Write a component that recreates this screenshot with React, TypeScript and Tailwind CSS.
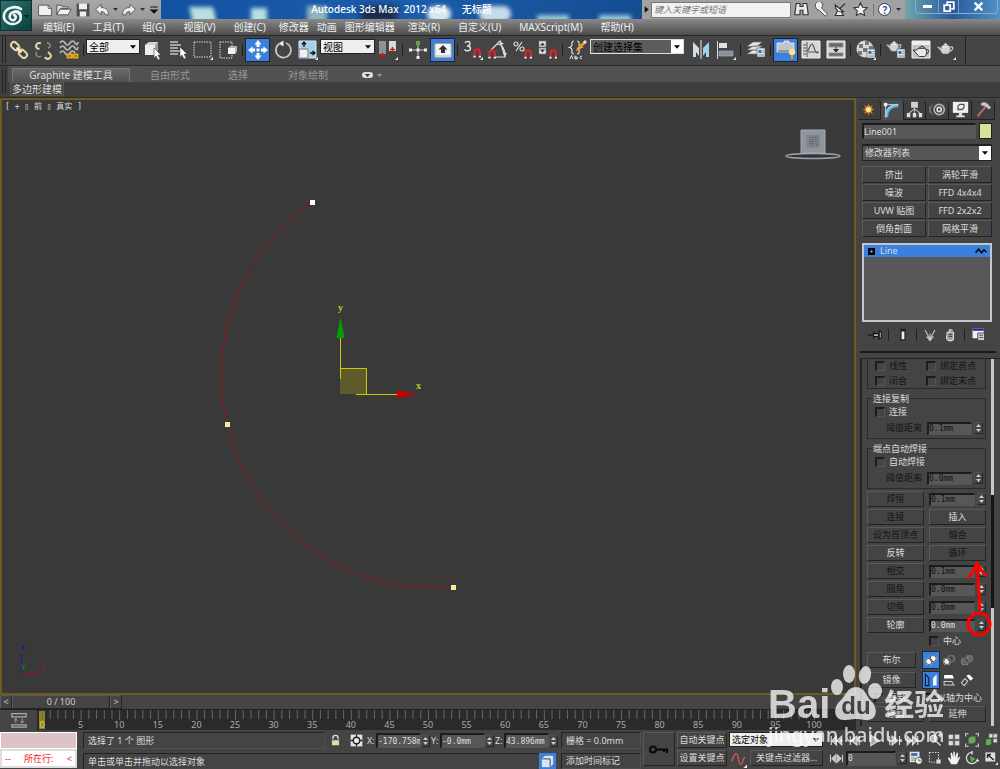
import React from 'react';

const btn = 'border border-t-[#5a5a5a] border-l-[#5a5a5a] border-b-[#242424] border-r-[#242424] bg-[#444] text-center whitespace-nowrap overflow-hidden';
const field = 'border border-t-[#1c1c1c] border-l-[#1c1c1c] border-t-2 border-l-2 border-b-[#555] border-r-[#555] bg-[#575757] min-w-0 outline-none';
const mono = "font-['DejaVu_Sans_Mono','Noto_Sans_CJK_SC',monospace] text-[8px]";

interface IconProps {
    children: React.ReactNode;
    size?: number;
}

const Icon: React.FC<IconProps> = ({ children, size = 20 }) => (
    <svg width={size} height={size} viewBox="0 0 20 20" fill="none" className="shrink-0">
        {children}
    </svg>
);

const Magnet = ({ x = 9, y = 9 }: { x?: number; y?: number }) => (
    <g transform={`translate(${x} ${y})`}>
        <path d="M1.5 8V4a2.7 2.7 0 0 1 5.4 0v4" stroke="#d8262a" strokeWidth="2.2" />
        <path d="M.4 8.6h2.2M5.8 8.6H8" stroke="#eee" strokeWidth="1.8" />
    </g>
);

const Corner = () => <path d="M20 17v3h-3z" fill="#eee" />;

const Card = ({ x = 11, y = 10 }: { x?: number; y?: number }) => (
    <g transform={`translate(${x} ${y})`}>
        <path d="M0 0h8v9H0z" fill="#dfe3e8" stroke="#555" strokeWidth=".6" />
        <path d="M1.5 2h3v3h-3z" fill="#2b72b8" />
        <path d="M5.5 2.5h1.5M5.5 4.5h1.5M1.5 7h5.5" stroke="#777" strokeWidth=".8" />
    </g>
);

const Teapot = ({ x = 1, y = 3, s = 1 }: { x?: number; y?: number; s?: number }) => (
    <g transform={`translate(${x} ${y}) scale(${s})`}>
        <path d="M4.5 4.5C6 3 12 3 13.500 4.500C15 9 13 12 11.500 12.500H6.500C5.500 12 4.500 11 4 9.500L0 5l3 .3L4.500 7z" fill="#cfd2d5" stroke="#777" strokeWidth=".5" />
        <path d="M14 5.500c3-1.500 4 1.500 0 4.500" stroke="#c4c7ca" strokeWidth="1.200" />
        <path d="M6 3.500h6L10 2.200 9 .8 8 2.200z" fill="#e8eaec" />
        <path d="M6 5.500c2-1 4-1 5 0" stroke="#fff" />
    </g>
);

const icons: Record<string, React.ReactNode> = {
    link: (
        <g stroke="#e8d3a8" strokeWidth="2" transform="rotate(45 10 10)">
            <rect x="0" y="7" width="9" height="6" rx="3" />
            <rect x="11" y="7" width="9" height="6" rx="3" />
            <path d="M6.500 10h7" stroke="#fff0d0" />
        </g>
    ),
    unlink: (
        <g stroke="#e8d3a8" strokeWidth="2">
            <path d="M7 3.500a3 3 0 1 0-3.500 5L5.500 9" />
            <path d="M11 17a3 3 0 0 0 5.500-2.500L14 12" />
            <path d="M13 3a2.500 2.500 0 1 1 1 5M3 12a2.500 2.500 0 1 0 4 4" stroke="#8d8d8d" strokeWidth="1.500" />
        </g>
    ),
    bind: (
        <g>
            <path d="M1 3q2.500-4 5 0t5 0 5 0 3-1M1 8q2.500-4 5 0t5 0 5 0 3-1M1 13q2.500-4 5 0t5 0 5 0" stroke="#bbb" strokeWidth="1.600" />
            <path d="M8.500 14.500h4v3h-4zM14.500 14.500h4v3h-4zM12 16h3" stroke="#e8a51a" strokeWidth="1.800" />
        </g>
    ),
    cube: (
        <g>
            <path d="M2 5l4-3h9v9l-3 4H2z" fill="#9ba1a8" />
            <path d="M2 5h10v10H2z" fill="#eceef0" />
            <path d="M2 5l4-3h9l-3 3z" fill="#cfd5db" />
            <path d="M11 8l7 7h-3l2 4-2 1-2-4-2 2z" fill="#fff" stroke="#444" strokeWidth=".6" />
        </g>
    ),
    byName: (
        <g>
            <path d="M2 2h8M2 5h11M2 8h8M2 11h10M2 14h8" stroke="#c5c5c5" strokeWidth="1.300" />
            <path d="M12 7l7 7h-3l2 4-2 1-2-4-2 2z" fill="#fff" stroke="#444" strokeWidth=".5" />
        </g>
    ),
    region: (
        <g>
            <path d="M1 2h17v15H1z" stroke="#ddd" strokeDasharray="1.500 1" />
            <Corner />
        </g>
    ),
    crossing: (
        <g>
            <path d="M2 2h12v16H2z" stroke="#ddd" strokeDasharray="1.500 1" />
            <path d="M10 8l2-2h7v6l-2 2h-7z" fill="#aeb4ba" />
            <path d="M10 8h7v6h-7z" fill="#f2f4f6" />
        </g>
    ),
    move: (
        <g fill="#fff">
            <path d="M10 0l3.500 4.500h-2V7h-3V4.500h-2zM10 20l3.500-4.500h-2V13h-3v2.500h-2zM0 10l4.500-3.500v2H7v3H4.500v2zM20 10l-4.500-3.500v2H13v3h2.500v2z" />
            <circle cx="10" cy="10" r="1.700" />
        </g>
    ),
    rotate: (
        <g stroke="#ccc" strokeWidth="1.700">
            <path d="M6 4a7.500 7.500 0 1 0 7-1" />
            <path d="M5.500 3.500l5-3v6z" fill="#eee" stroke="none" />
        </g>
    ),
    scale: (
        <g>
            <path d="M1 1h17v17H1z" fill="#a8cfe6" stroke="#d2ecfa" />
            <path d="M1 9h9v9H1z" fill="#eef1f3" stroke="#778" />
            <path d="M6 7V3m-2 1.500L6 2l2 2.500M12 13h4m-1.500-2L17 13l-2.500 2" stroke="#111" strokeWidth="1.300" />
            <Corner />
        </g>
    ),
    pivot: (
        <g>
            <path d="M1 1h7v13H1z" fill="#8d9299" />
            <path d="M11 1h7v10h-7z" fill="#d7dbdf" />
            <path d="M4.500 13v5M2 15.500h5M14.500 7v5M12 9.500h5" stroke="#e01010" strokeWidth="1.500" />
            <Corner />
        </g>
    ),
    manipulate: (
        <g>
            <path d="M10 3v15M2 10h16" stroke="#ccc" />
            <path d="M8 1h4v4H8z" fill="#5dab43" />
            <path d="M1 8.500h3v3H1zM16 8.500h3v3h-3zM8.500 16h3v3h-3zM8.500 8.500h3v3h-3z" fill="#eee" />
        </g>
    ),
    keyboard: (
        <g>
            <rect x="1" y="3" width="18" height="15" rx="2" fill="#cfd5dc" stroke="#6a7380" />
            <rect x="3" y="4" width="14" height="11" rx="1" fill="#f2f5f8" />
            <path d="M10 5l4.500 4.500H12V13H8V9.500H5.500z" fill="#303030" />
        </g>
    ),
    snap: (
        <g>
            <path d="M2 3c1-2 5-2 5 .5S5 6 4 6c1.500 0 3.500 0 3.500 2.500S3 11.500 1.500 9.500" stroke="#ddd" strokeWidth="1.400" />
            <Magnet x={10} y={8} />
            <Corner />
        </g>
    ),
    angle: (
        <g>
            <path d="M1 12L12 1l5 16H8M9 4c5 0 8 5 8 11" stroke="#ddd" strokeWidth="1.200" />
            <path d="M12 1l4 3-4 1zM15 13h4l-2 4z" fill="#ddd" />
            <Magnet x={0} y={9} />
        </g>
    ),
    percent: (
        <g>
            <g stroke="#ddd" strokeWidth="1.200">
                <circle cx="3" cy="4" r="2" />
                <circle cx="9" cy="9" r="2" />
                <path d="M9 2L3 11" />
            </g>
            <Magnet x={11} y={9} />
        </g>
    ),
    spinner: (
        <g>
            <path d="M1 1h7v6H1zM1 8h7v6H1z" fill="#dfe3e8" stroke="#777" strokeWidth=".6" />
            <path d="M4.500 2.500L7 5.500H2zM4.500 12.500L2 9.500h5z" fill="#333" />
            <Magnet x={11} y={9} />
        </g>
    ),
    braces: (
        <g>
            <path d="M6 1C3 1 4 4 4 5S3 7 1.500 7.500C4 8 4 9 4 10s-1 4 2 4M9 1c3 0 2 3 2 4s1 2 2.500 2.500C11 8 11 9 11 10s1 4-2 4" stroke="#ddd" strokeWidth="1.200" />
            <path d="M8 11l1-3 7-7 2 2-7 7z" fill="#f0a022" />
            <path d="M15 2l2-2 2 2-2 2z" fill="#f6e3c0" />
            <path d="M2 19l1.500-3.500L5 19M7 15.500V19h2l.5-1-.5-1H7M14 16.500c-2-1.500-3 2.500 0 2" stroke="#eee" />
        </g>
    ),
    mirror: (
        <g>
            <path d="M2 2l6 6v8l-3-4v5H2z" fill="#d8dce0" />
            <path d="M18 2l-6 6v8l3-4v5h3z" fill="#9fd4ee" />
            <path d="M10 0v19" stroke="#eee" />
        </g>
    ),
    align: (
        <g>
            <path d="M1.500 1v18" stroke="#ddd" />
            <path d="M3 3h8v5H3z" fill="#dde1e5" />
            <path d="M3 11h14v5H3z" fill="#87909c" stroke="#b0b6bd" strokeWidth=".6" />
            <Corner />
        </g>
    ),
    layers: (
        <g>
            <path d="M1 14l6-4h9l-5 4zM1 10l6-4h9l-5 4zM1 6.500L7 2h9l-5 4.500z" fill="#e0e4e7" stroke="#666" strokeWidth=".6" />
            <Card x={11} y={8} />
        </g>
    ),
    ribbon: (
        <g>
            <path d="M1 3h7V1h5v2h5v9H1z" fill="#bfc6ce" stroke="#fff" strokeWidth=".7" />
            <path d="M2 10h14v3H2z" fill="#9099a3" />
            <circle cx="16" cy="12" r="3.200" fill="#ffe08a" />
            <path d="M14.800 15h2.400v4h-2.400z" fill="#e3982b" />
        </g>
    ),
    curve: (
        <g>
            <path d="M1 1h18v17H1z" fill="#d5d7d9" stroke="#eee" />
            <path d="M6 2v15M2 5h3M2 8h3M2 11h3M2 14h3" stroke="#555" />
            <path d="M6 11c2 0 3-7 5-7s2 9 6 9M7 12h11" stroke="#555" strokeWidth="1.200" />
        </g>
    ),
    schematic: (
        <g>
            <path d="M1 1h18v17H1z" fill="#d5d7d9" stroke="#eee" />
            <path d="M3 3h14v4H3zM3 13h14v3H3z" fill="#666" stroke="#999" />
            <path d="M10 7v4M7.500 9.500h5L10 12z" stroke="#333" fill="#333" />
        </g>
    ),
    material: (
        <g>
            <circle cx="9" cy="9" r="8.500" fill="#d8d8d8" />
            <path d="M3 4h4v4H3zM9 1h4v4H9zM7 8h4v4H7zM13 6h4v4h-4zM2 11h4v4H2zM11 12h4v4h-4z" fill="#777" />
            <Card x={11} y={9} />
            <Corner />
        </g>
    ),
    renderSetup: (
        <g>
            <Teapot x={0} y={0} s={0.9} />
            <Card x={11} y={9} />
        </g>
    ),
    frame: (
        <g>
            <path d="M1 1h18v17H1z" fill="#bfc1c3" stroke="#f2f2f2" />
            <path d="M1 1h18v4H1z" fill="#eceef0" />
            <g transform="translate(2 5)">
                <path d="M4.500 4C6 3 12 3 13 4c1.500 4 0 7-1.500 7.500H6.500C5 11 4.500 10 4 9L0 5l3 .3z" fill="#e8e8e8" stroke="#333" />
                <path d="M13 5c4-1.500 3 3 .5 4M6 3l3-2 3 2" stroke="#333" />
            </g>
        </g>
    ),
    render: (
        <g>
            <Teapot x={1} y={2} s={0.95} />
            <Corner />
        </g>
    ),
};

const Tool: React.FC<{ name: string; active?: boolean }> = ({ name, active }) => (
    <button
        aria-label={name}
        className={`flex h-6 w-[25px] shrink-0 items-center justify-center ${active ? 'border border-[#17243a] bg-[#3a80dc]' : ''}`}
    >
        <Icon>{icons[name]}</Icon>
    </button>
);

const Sep = () => <span className="mx-[2px] h-3 w-px shrink-0 bg-[#1e1e1e]" />;

const Arrow = ({ className = '' }: { className?: string }) => (
    <svg width="7" height="4" viewBox="0 0 7 4" className={className}>
        <path d="M0 0h7L3.500 4z" fill="currentColor" />
    </svg>
);

interface DropProps {
    label: string;
    value: string;
    box: string;
    arrow?: string;
}

const Drop: React.FC<DropProps> = ({ label, value, box, arrow = '' }) => (
    <div className={`relative shrink-0 ${box}`}>
        <select aria-label={label} className="block h-full w-full appearance-none truncate bg-transparent pl-[2px] outline-none">
            <option>{value}</option>
        </select>
        <span className={`pointer-events-none absolute inset-y-0 right-0 flex w-3 items-center justify-center text-black ${arrow}`}>
            <Arrow className="w-[6px]" />
        </span>
    </div>
);

const Spinner = ({ label }: { label: string }) => (
    <span className="flex h-3 w-[9px] shrink-0 flex-col items-center justify-center gap-[2px] border border-t-[#505050] border-l-[#505050] border-b-[#262626] border-r-[#262626] text-[#ccc]">
        <button aria-label={`${label} +`}><Arrow className="h-[3px] w-[5px] rotate-180" /></button>
        <button aria-label={`${label} -`}><Arrow className="h-[3px] w-[5px]" /></button>
    </span>
);

const Check: React.FC<{ label: string; dim?: boolean }> = ({ label, dim }) => (
    <label className={`flex h-4 items-center gap-1 whitespace-nowrap ${dim ? 'text-[#141414]' : ''}`}>
        <input type="checkbox" className="size-[10px] appearance-none border-t-2 border-l-2 border-r border-b border-t-[#1c1c1c] border-l-[#1c1c1c] border-r-[#555] border-b-[#555]" />
        {label}
    </label>
);

const Distance: React.FC<{ value: string }> = ({ value }) => (
    <label className="flex h-4 items-center pl-4 text-[#141414]">
        <span className="w-[43px] pr-[5px] text-right whitespace-nowrap">阈值距离</span>
        <input defaultValue={value} className={`h-[13px] w-[45px] ${field} ${mono}`} />
        <span className="ml-[2px]"><Spinner label={value} /></span>
    </label>
);

const menus = ['编辑(E)', '工具(T)', '组(G)', '视图(V)', '创建(C)', '修改器', '动画', '图形编辑器', '渲染(R)', '自定义(U)', 'MAXScript(M)', '帮助(H)'];

const Header = () => (
    <header className="flex h-[35px] bg-linear-to-b from-[#8f8f8f] from-50% to-[#4d4d4d]">
        <button aria-label="Application" className="h-[31px] w-8 shrink-0 border border-[#16302f] bg-linear-to-br from-[#2b7571] to-[#06403f]">
            <svg width="30" height="29" viewBox="0 0 30 29" fill="none">
                <path d="M20 8C14 4 4 7 3 14s7 11 13 8 4-11-2-11-7 7-3 8 5-4 2-5" stroke="#f1f7f6" strokeWidth="2.500" strokeLinecap="round" />
                <path d="M11 12c4-4 10-2 9 4" stroke="#f1f7f6" strokeWidth="1.500" />
                <path d="M23 14h5l-2.500 3z" fill="#041c1c" />
            </svg>
        </button>
        <div className="flex min-w-0 flex-1 flex-col">
            <div className="flex h-[19px] items-stretch bg-[#1d5ba6]">
                <div className="flex w-[129px] shrink-0 items-center gap-[3px] bg-linear-to-b from-[#a8a8a8] to-[#9a9a9a] pl-[5px] text-[#333]">
                    <Icon size={16}>
                        <path d="M2 4h12l4 4v9H2z" fill="#f2f2f2" stroke="#444" />
                        <path d="M14 4v4h4" stroke="#444" />
                    </Icon>
                    <Icon size={16}>
                        <path d="M1 4h6l1 2h7v2H6l-5 7z" fill="#ddd" stroke="#444" />
                        <path d="M5 9h14l-4 7H1z" fill="#f3f3f3" stroke="#444" />
                    </Icon>
                    <Icon size={16}>
                        <path d="M2 2h16v16H2z" fill="#4b5057" />
                        <path d="M5 2h10v7H5zM6 12h8v6H6z" fill="#f0f0f0" />
                    </Icon>
                    <Icon size={16}>
                        <path d="M2 9l7-6v4c6 0 9 3 9 9h-4c0-3-2-4-5-4v4z" fill="#f0f0f0" stroke="#444" />
                    </Icon>
                    <Arrow className="h-[3px] w-[5px]" />
                    <Icon size={16}>
                        <path d="M18 9l-7-6v4c-6 0-9 3-9 9h4c0-3 2-4 5-4v4z" fill="#f0f0f0" stroke="#444" />
                    </Icon>
                    <Arrow className="h-[3px] w-[5px]" />
                    <Icon size={12}>
                        <path d="M4 5h12M5 10h10l-5 5z" fill="#111" stroke="#111" strokeWidth="2" />
                    </Icon>
                </div>
                <h1 className="relative min-w-0 flex-1 overflow-hidden bg-linear-to-r from-[#1152a3] via-[#1c5dab] to-[#154c92] text-center text-[10px] leading-[18px] font-medium whitespace-pre text-white">
                    <span className="absolute top-[7px] left-[30px] h-4 w-6 skew-x-12 bg-[#b9dfdf] blur-[2px]" />
                    <span className="absolute top-2 left-[90px] h-4 w-4 bg-[#b9dfdf] blur-[2px]" />
                    <span className="absolute top-[6px] left-[146px] h-4 w-5 bg-[#8fb4ba] blur-[2px]" />
                    <span className="absolute top-[6px] left-[200px] h-4 w-9 bg-[#1b2c4b] blur-[3px]" />
                    <span className="absolute top-[6px] left-[266px] h-4 w-6 rounded-full bg-[#d7eaf0] blur-[2px]" />
                    <span className="absolute top-[6px] left-[318px] h-4 w-8 rounded-full bg-[#c7dcea] blur-[2px]" />
                    <span className="absolute top-[15px] left-[376px] h-2 w-8 bg-[#9cc7de] blur-[2px]" />
                    <span className="absolute top-[15px] left-[438px] h-2 w-8 bg-[#9cc7de] blur-[2px]" />
                    <span className="relative">Autodesk 3ds Max  2012 x64      无标题</span>
                </h1>
                <div className="flex w-[263px] shrink-0 items-center bg-[#a1a1a1]">
                    <Icon size={9}><path d="M6 3l9 7-9 7z" fill="#111" /></Icon>
                    <input aria-label="搜索" placeholder="键入关键字或短语" className="h-4 w-[140px] border border-[#777] bg-[#f2f2f2] pl-[2px] text-[9px] italic outline-none placeholder:text-[#777]" />
                    <div className="flex flex-1 items-center justify-between px-1 pl-[3px]">
                        <Icon size={15}>
                            <path d="M3 2h5v4h4V2h5l2 15h-7v-6H8v6H1z" fill="#e8e8e8" stroke="#333" strokeWidth="1.500" />
                        </Icon>
                        <Icon size={15}>
                            <path d="M2 6a5 5 0 1 1 8 2l8 8-3 3-8-8a5 5 0 0 1-5-5z" fill="#eee" stroke="#444" strokeWidth="1.200" />
                        </Icon>
                        <Icon size={15}>
                            <path d="M3 4c0 8 5 10 11 9zM9 9l7-7M6 12l-3 6h11l-3-5" fill="#eee" stroke="#333" strokeWidth="1.500" />
                        </Icon>
                        <Icon size={15}>
                            <path d="M10 1l2.700 6 6.300.6-4.800 4.200L15.600 18 10 15l-5.600 3 1.400-6.200L1 7.600 7.300 7z" fill="#eee" stroke="#333" strokeWidth="1.400" />
                        </Icon>
                        <span className="h-3 w-px bg-[#777]" />
                        <span className="flex size-[13px] items-center justify-center rounded-full border border-[#335] bg-white text-[10px] leading-none font-bold text-[#1d57a8]">?</span>
                        <Arrow className="h-[3px] w-[5px] text-[#333]" />
                    </div>
                </div>
                <div className="flex w-[95px] shrink-0 justify-center bg-linear-to-r from-[#6ea5a8] via-[#2a5a9b] to-[#4f93c6] pr-[2px] pl-[10px]">
                    <div className="flex h-[14px] flex-1 divide-x divide-[#7aa0c8] rounded-b border border-t-0 border-[#88abcf] text-white">
                        <button aria-label="Minimize" className="flex w-[23px] items-center justify-center"><span className="h-[3px] w-[9px] bg-white" /></button>
                        <button aria-label="Restore" className="flex w-[20px] items-center justify-center">
                            <Icon size={12}><path d="M7 6V2h11v11h-4M2 7h10v10H2z" stroke="#fff" strokeWidth="3" /></Icon>
                        </button>
                        <button aria-label="Close" className="flex flex-1 items-center justify-center">
                            <Icon size={11}><path d="M3 3l14 14M17 3L3 17" stroke="#fff" strokeWidth="4" /></Icon>
                        </button>
                    </div>
                </div>
            </div>
            <nav className="flex flex-1 items-center pl-[2px] text-[10px] leading-4 text-[#f0f0f0]">
                {menus.map(m => (
                    <button key={m} className={m.includes('(') ? 'px-[9px]' : 'px-1'}>{m}</button>
                ))}
            </nav>
        </div>
    </header>
);

const Grip = () => <span className="ml-[2px] w-1 shrink-0 self-stretch border-x border-[#222]" />;

const Toolbar = () => (
    <div className="border-y border-[#2a2a2a] bg-[#444]">
        <div className="flex h-[29px] w-fit items-center border-r border-[#222] pb-[2px] pr-[7px] text-[10px] text-black">
            <Grip />
            <Tool name="link" />
            <Tool name="unlink" />
            <Tool name="bind" />
            <Sep />
            <Drop label="选择过滤器" value="全部" box="mb-[6px] h-[15px] w-[54px] border border-[#222] bg-[#efefef]" />
            <Tool name="cube" />
            <Tool name="byName" />
            <Tool name="region" />
            <Tool name="crossing" />
            <Sep />
            <Tool name="move" active />
            <Tool name="rotate" />
            <Tool name="scale" />
            <Drop label="参考坐标系" value="视图" box="mb-[6px] h-[15px] w-[55px] border border-[#222] bg-[#efefef]" />
            <Tool name="pivot" />
            <Sep />
            <Tool name="manipulate" />
            <Tool name="keyboard" active />
            <Sep />
            <Tool name="snap" />
            <Tool name="angle" />
            <Tool name="percent" />
            <Tool name="spinner" />
            <Sep />
            <Tool name="braces" />
            <Drop label="命名选择集" value="创建选择集" box="mr-1 mb-[6px] h-[15px] w-[94px] border border-[#ddd] bg-[#5c5c5c] leading-3" arrow="bg-white" />
            <Tool name="mirror" />
            <Tool name="align" />
            <Sep />
            <Tool name="layers" />
            <Sep />
            <Tool name="ribbon" active />
            <Tool name="curve" />
            <Tool name="schematic" />
            <Sep />
            <Tool name="material" />
            <Sep />
            <Tool name="renderSetup" />
            <Tool name="frame" />
            <Tool name="render" />
        </div>
    </div>
);

const Ribbon = () => (
    <div className="flex h-[32px] border-b border-[#2a2a2a] bg-[#3e3e3e] text-[10px] leading-[13px] text-[#999]">
        <div className="flex w-2 shrink-0 py-1"><Grip /></div>
        <div className="min-w-0 flex-1">
            <div className="flex h-[16px] items-end bg-[#515151] pl-1">
                <button className="w-[118px] border border-b-0 border-[#777] bg-linear-to-b from-[#6a6a6a] to-[#505050] text-[#ddd]">Graphite 建模工具</button>
                <button className="ml-[20px]">自由形式</button>
                <button className="ml-[38px]">选择</button>
                <button className="ml-[40px]">对象绘制</button>
                <button aria-label="最小化" className="mb-1 ml-[34px] flex h-[6px] w-[11px] items-center justify-center rounded-sm bg-[#ddd] text-[#333]"><Arrow className="h-[3px] w-[5px]" /></button>
                <Arrow className="mb-[5px] ml-1 h-[3px] w-[5px]" />
            </div>
            <button className="ml-[2px] h-[14px] border border-[#555] bg-[#474747] px-px text-[#ddd]">多边形建模</button>
        </div>
    </div>
);

const vertices = [[312, 104], [227, 326], [453, 489]];

const Viewport = () => (
    <section className="relative min-h-0 flex-1 overflow-hidden border-2 border-[#6d5c1f] bg-[#393939]">
        <p className="pl-[3px] font-['DejaVu_Sans_Mono','Noto_Sans_CJK_SC',monospace] text-[8px] leading-[13px] text-[#ddd]">[ + ▯ 前 ▯ 真实 ]</p>
        <svg width="480" height="510" viewBox="2 2 480 510" fill="none" className="absolute top-0 left-0">
            <path d="M312 104A212 212 0 0 0 227 326A212 212 0 0 0 453 489" stroke="#8e1518" />
            {vertices.map(([x, y], i) => (
                <rect key={x} x={x - 2} y={y - 2} width="5" height="5" fill={i ? '#f0eea0' : '#fff'} />
            ))}
            <path d="M340 270h26v26h-26z" fill="#5d5a2b" />
            <path d="M340.500 239v42M340 270.500h26.500V296M356 296.500h41" stroke="#cfc800" />
            <path d="M340.500 219l4 21h-8z" fill="#00a000" />
            <path d="M417 296.500l-20 4v-8z" fill="#c80000" />
            <g className="font-['Liberation_Serif',serif] text-[10px] font-bold" fill="#c8c22a">
                <text x="338" y="213">y</text>
                <text x="416" y="291">x</text>
            </g>
        </svg>
        <svg width="40" height="40" viewBox="0 0 40 40" fill="none" className="absolute bottom-[13px] left-[15px]">
            <path d="M4.500 14v19" stroke="#1717a0" />
            <path d="M4 33.500h20" stroke="#951515" />
            <g className="font-['Liberation_Serif',serif] text-[9px] font-bold">
                <text x="4" y="10" fill="#1717b0">z</text>
                <text x="4" y="29" fill="#108a10">y</text>
                <text x="23" y="29" fill="#951515">x</text>
            </g>
        </svg>
        <svg width="60" height="34" viewBox="0 0 60 34" className="absolute top-[28px] right-[10px]">
            <ellipse cx="29" cy="28" rx="27" ry="2.500" fill="#333" stroke="#9aa1a8" strokeWidth="1.500" />
            <path d="M17 2h24v23H17z" fill="#8f949d" stroke="#a5acb5" />
            <path d="M22 7h14v13H22z" fill="#84888f" />
            <text x="24" y="17" fill="#62666d" className="font-['Noto_Sans_CJK_SC',sans-serif] text-[11px]">前</text>
        </svg>
    </section>
);

const frames = Array.from({ length: 101 }, (_, i) => i);

const Track = () => (
    <div>
        <div className="flex h-[14px] items-stretch text-center text-[9px] leading-3 text-[#ccc]">
            <button aria-label="上一帧" className={`w-3 ${btn}`}>&lt;</button>
            <button className={`w-[98px] ${btn}`}>0 / 100</button>
            <button aria-label="下一帧" className={`w-3 ${btn}`}>&gt;</button>
        </div>
        <div className="flex h-[21px] border-t border-[#222] bg-[#2a2a2a]">
            <div className="flex w-[37px] shrink-0 items-center justify-center bg-[#444]">
                <Icon size={16}>
                    <path d="M1 2h18v4H1zM1 16h18v3H1z" stroke="#aaa" strokeWidth="1.500" />
                    <path d="M6 8v6M4 11l2-3 2 3M14 8v6M12 11l2 3 2-3" stroke="#aaa" />
                </Icon>
            </div>
            <div className="flex-1 pr-[42px] pl-[5px]">
                <svg width="100%" height="20" className="overflow-visible">
                    <rect x="-3" y="1" width="6" height="18" fill="#8b8420" />
                    {frames.map(f => (
                        <rect key={f} x={`${f}%`} y="0" width="1" height={f % 5 ? 9 : 10} fill="#666" />
                    ))}
                    {frames.filter(f => f % 5 === 0).map(f => (
                        <text key={f} x={`${f}%`} y="18" textAnchor="middle" fill={f ? '#aaa' : '#ded060'} className="text-[9px]">{f}</text>
                    ))}
                </svg>
            </div>
        </div>
    </div>
);

const tabIcons: React.ReactNode[] = [
    <g>
        <path d="M10 3l1.500 3.500L15 5l-1.500 3.500L17 10l-3.500 1.500L15 15l-3.500-1.500L10 17l-1.500-3.500L5 15l1.500-3.500L3 10l3.500-1.500L5 5l3.500 1.500z" fill="#e07a1c" />
        <circle cx="10" cy="10" r="3" fill="#ffeaa0" />
    </g>,
    <g>
        <path d="M3 18V3h15" stroke="#ddd" />
        <path d="M4 18C4 9 9 4 18 4" stroke="#5fb4ea" strokeWidth="4" />
        <path d="M3 18C3 8 9 3 18 3" stroke="#cdeafa" />
        <path d="M1 1h4v4H1z" fill="#eee" />
    </g>,
    <g>
        <path d="M6 1h8v7H6z" fill="#cfd3d7" />
        <path d="M10 8v7M10 9l-7 6M10 9l7 6" stroke="#bbb" strokeWidth="1.200" />
        <path d="M1 14h4v5H1zM8 14h4v5H8zM15 14h4v5h-4z" fill="#dde0e3" />
    </g>,
    <g>
        <circle cx="12" cy="10" r="6" stroke="#aab0b8" strokeWidth="2" />
        <circle cx="12" cy="10" r="2.500" stroke="#ddd" strokeWidth="2" />
        <path d="M4 4c-3 4-3 8 0 12M1.500 6c-2 3-2 5 0 8" stroke="#8a8a8a" />
    </g>,
    <g>
        <path d="M1 1h18v13H1z" fill="#eef0f2" />
        <path d="M7 6l2-2h5v4l-2 2H7z" stroke="#555" strokeWidth="1.500" />
        <path d="M8 14h4v3h3v2H5v-2h3z" fill="#ddd" />
    </g>,
    <g>
        <path d="M13 6L3 18" stroke="#b86a5c" strokeWidth="2.500" />
        <path d="M7 3c5-4 8 0 12 5l-3 2c-2-3-4-4-9-5z" fill="#c2c6ca" />
    </g>,
];

const modifiers = ['挤出', '涡轮平滑', '噪波', 'FFD 4x4x4', 'UVW 贴图', 'FFD 2x2x2', '倒角剖面', '网格平滑'];

const geometry: { name: string; other?: string; value?: string; on?: boolean; otherOn?: boolean }[] = [
    { name: '焊接', value: '0.1mm' },
    { name: '连接', other: '插入', otherOn: true },
    { name: '设为首顶点', other: '熔合' },
    { name: '反转', other: '循环', on: true },
    { name: '相交', value: '0.1mm' },
    { name: '圆角', value: '0.0mm' },
    { name: '切角', value: '0.0mm' },
    { name: '轮廓', value: '0.0mm', on: true },
];

const Rings = ({ a, b }: { a: string; b: string }) => (
    <Icon size={14}>
        <circle cx="13" cy="8" r="4.500" fill={b} stroke="#ddd" strokeWidth="1.500" />
        <circle cx="7" cy="12" r="4.500" fill={a} stroke="#ddd" strokeWidth="1.500" />
        <circle cx="13" cy="8" r="4.500" stroke="#222" />
        <circle cx="7" cy="12" r="4.500" stroke="#222" />
    </Icon>
);

const active = 'flex size-[18px] items-center justify-center border border-[#1b2a40] bg-[#3a80dc]';
const idle = 'flex size-[18px] items-center justify-center';

const Rollout = () => (
    <div className="relative ml-[4px] flex min-h-0 flex-1 border-t border-l border-[#222]">
        <div className="flex w-[130px] flex-col overflow-hidden border-l border-[#222] pr-[5px] pl-[5px]">
            <div className="h-[30px] shrink-0 overflow-hidden border border-t-0 border-[#2a2a2a] pl-[7px]">
                {[['线性', '绑定首点'], ['闭合', '绑定末点']].map(([a, b]) => (
                    <div key={a} className="-mt-px flex">
                        <div className="w-[51px]"><Check label={a} dim /></div>
                        <Check label={b} dim />
                    </div>
                ))}
            </div>
            {[['连接复制', '连接', '0.1mm'], ['端点自动焊接', '自动焊接', '6.0mm']].map(([legend, name, value]) => (
                <fieldset key={legend} className="mt-[3px] shrink-0 border border-[#2a2a2a] pb-[2px]">
                    <legend className="ml-1 px-px leading-[13px]">{legend}</legend>
                    <div className="-mt-px pl-[7px]"><Check label={name} /></div>
                    <Distance value={value} />
                </fieldset>
            ))}
            <div className="mt-[2px] grid shrink-0 grid-cols-2 gap-x-[5px] gap-y-[2px]">
                {geometry.map(g => (
                    <React.Fragment key={g.name}>
                        <button className={`h-4 leading-[14px] ${btn} ${g.on ? 'text-[#ddd]' : 'text-[#141414]'}`}>{g.name}</button>
                        {g.other ? (
                            <button className={`h-4 leading-[14px] ${btn} ${g.otherOn ? 'text-[#ddd]' : 'text-[#141414]'}`}>{g.other}</button>
                        ) : (
                            <div className="flex items-center gap-[2px]">
                                <input aria-label={g.name} defaultValue={g.value} className={`h-[13px] flex-1 ${field} ${mono} ${g.on ? 'text-[#ddd]' : 'text-[#141414]'}`} />
                                <Spinner label={g.name} />
                            </div>
                        )}
                    </React.Fragment>
                ))}
            </div>
            <div className="shrink-0 pl-[62px]"><Check label="中心" /></div>
            <div className="mt-px flex h-5 shrink-0 items-center">
                <button className={`mr-[6px] h-4 w-[49px] leading-[14px] ${btn}`}>布尔</button>
                <button aria-label="并集" className={active}><Rings a="#fff" b="#fff" /></button>
                <button aria-label="差集" className={idle}><Rings a="#eee" b="#444" /></button>
                <button aria-label="相交" className={idle}><Rings a="#666" b="#666" /></button>
            </div>
            <div className="flex h-5 shrink-0 items-center">
                <button className={`mr-[6px] h-4 w-[49px] leading-[14px] ${btn}`}>镜像</button>
                <button aria-label="水平镜像" className={active}>
                    <Icon size={14}><path d="M2 2l5 5v11H2z" stroke="#111" strokeWidth="1.500" /><path d="M18 2l-5 5v11h5z" fill="#fff" /></Icon>
                </button>
                <button aria-label="垂直镜像" className={idle}>
                    <Icon size={14}><path d="M3 3h12l2 5H3z" fill="#fff" /><path d="M3 17h14l-3-5H3z" stroke="#ccc" strokeWidth="1.500" /></Icon>
                </button>
                <button aria-label="双向镜像" className={idle}>
                    <Icon size={14}><path d="M9 4l4-2 6 6-4 3z" fill="#fff" /><path d="M2 14l5-6 4 4-5 6z" stroke="#ccc" strokeWidth="1.500" /></Icon>
                </button>
            </div>
            <div className="flex shrink-0 justify-between pr-1 pl-[7px]">
                <Check label="复制" />
                <Check label="以轴为中心" />
            </div>
            <div className="grid shrink-0 grid-cols-2 gap-x-[5px]">
                <button className={`h-4 leading-[14px] ${btn}`}>修剪</button>
                <button className={`h-4 leading-[14px] ${btn}`}>延伸</button>
            </div>
        </div>
        <div className="flex w-[3px] flex-col bg-[#c8c8c8]">
            <span className="mt-[136px] h-[113px] bg-[#151515]" />
        </div>
        <svg width="28" height="80" viewBox="0 0 28 80" fill="none" className="pointer-events-none absolute top-[200px] right-[6px]">
            <path d="M14 50L11 5M3 18c4-4 6-8 8-14 3 6 5 9 9 12" stroke="#f00" strokeWidth="3" strokeLinecap="round" strokeLinejoin="round" />
            <ellipse cx="13" cy="65" rx="11" ry="11" stroke="#f00" strokeWidth="3" />
        </svg>
    </div>
);

const CommandPanel = () => (
    <aside className="flex w-[144px] shrink-0 flex-col bg-[#444] text-[9px] leading-3 text-[#ddd]">
        <div className="flex h-[22px] pt-[2px] pr-[5px] pl-[2px]">
            {tabIcons.map((icon, i) => (
                <button key={i} aria-label={`面板 ${i + 1}`} className={`flex flex-1 items-center justify-center rounded-t border-r border-[#222] ${i === 1 ? 'bg-[#4c4c4c]' : 'border-b bg-[#3f3f3f]'}`}>
                    <Icon size={17}>{icon}</Icon>
                </button>
            ))}
        </div>
        <div className="flex flex-col pt-[3px] pr-2 pl-[6px]">
            <div className="flex h-4 gap-[3px]">
                <input aria-label="名称" defaultValue="Line001" className={`h-4 flex-1 ${field}`} />
                <button aria-label="颜色" className="w-[13px] border border-[#222] bg-[#d6e39a]" />
            </div>
            <Drop label="修改器列表" value="修改器列表" box="mt-[5px] h-[17px] w-full border border-t-2 border-[#222] bg-[#555]" arrow="bg-white" />
            <div className="mt-[5px] grid grid-cols-2 gap-x-[2px] gap-y-px">
                {modifiers.map(m => <button key={m} className={`h-[17px] leading-[15px] ${btn}`}>{m}</button>)}
            </div>
            <div className="mt-[6px] h-[79px] border-2 border-[#c3c6cc] bg-[#575757]">
                <div className="flex h-3 items-center bg-[#3a80dc] pr-[3px] pl-1">
                    <span className="flex size-[7px] items-center justify-center bg-black text-[7px] leading-none">+</span>
                    <span className="ml-[5px] flex-1">Line</span>
                    <Icon size={12}><path d="M1 13l5-6 5 6 4-5 4 4" stroke="#050505" strokeWidth="2.500" /></Icon>
                </div>
            </div>
            <div className="mt-1 flex h-[17px] items-center justify-between px-[6px]">
                <Icon size={14}><path d="M0 10h8M8 5v10M8 8h7v4H8M16 4l3 2v8l-3 2z" stroke="#111" strokeWidth="1.500" fill="#bbb" /></Icon>
                <span className="h-3 w-px bg-[#222]" />
                <Icon size={14}><path d="M6 2h8M7 4h6v13H7z" fill="#eee" stroke="#222" strokeWidth="2" /></Icon>
                <span className="h-3 w-px bg-[#222]" />
                <Icon size={14}><path d="M3 3l7 13 7-13M10 8v8M5 12l5 6 5-6" stroke="#ccc" strokeWidth="1.500" /></Icon>
                <Icon size={14}><path d="M6 6h9v10l-2 2H8l-3-3zM8 6l2-4 4 2" fill="#999" stroke="#ddd" strokeWidth="1.500" /><path d="M8 9h5M8 12h5" stroke="#222" /></Icon>
                <span className="h-3 w-px bg-[#222]" />
                <Icon size={15}><path d="M2 2h15v13H2z" fill="#eee" /><path d="M2 2h15v3H2z" fill="#2222a8" /><path d="M9 8h9v10H9z" fill="#ccc" stroke="#333" /><path d="M11 11h5M11 14h5" stroke="#333" /></Icon>
            </div>
        </div>
        <div className="mx-[4px] mt-[8px] mb-[5px] border-t-2 border-[#1b1b1b]" />
        <Rollout />
        <div className="h-[4px] shrink-0" />
    </aside>
);

const coords = [['X:', '-170.758m'], ['Y:', '-0.0mm'], ['Z:', '43.896mm']];

const transport = ['M3 4v12M10 4v12l-6-6zM17 4v12l-6-6z', 'M3 4v12M12 4v12l-8-6zM15 4v12', 'M5 3v14l11-7z', 'M5 4v12M8 4v12l8-6zM18 4v12', 'M3 4v12l6-6zM10 4v12l6-6zM17 4v12'];

const navTop: React.ReactNode[] = [
    <g stroke="#ddd" strokeWidth="2"><circle cx="8" cy="8" r="5" fill="#bbb" /><path d="M12 12l6 6M14 3h6M17 0v6" /></g>,
    <path d="M2 2h7v7H2zM11 2h7v7h-7zM2 11h7v7H2zM11 11h7v7h-7z" fill="#ddd" stroke="#666" />,
    <g><path d="M1 5V1h4M15 1h4v4M1 15v4h4M19 15v4h-4" stroke="#ddd" strokeWidth="1.500" /><path d="M5 8l3-3h7v7l-3 3H5z" fill="#67a957" /></g>,
    <g><path d="M7 1h6v6H7zM13 1h6v6h-6zM13 8h6v6h-6z" fill="#ddd" stroke="#555" /><path d="M2 10l2-2h7v7l-2 3H2z" fill="#67a957" stroke="#333" /></g>,
];

const navBottom: React.ReactNode[] = [
    <g><path d="M2 2h13v14H2z" stroke="#ddd" strokeWidth="1.500" strokeDasharray="2 2" /><path d="M12 12h6v6h-6z" fill="#ddd" /></g>,
    <path d="M6 19L1 10l2-1 3 3L5 3l2-1 2 7V1h2l1 8 2-7 2 1-1 8 3-3 1 1-5 10z" fill="#f2f2f2" />,
    <g><path d="M10 2a8 8 0 1 0 8 9" stroke="#ddd" strokeWidth="1.800" /><path d="M7 7l8 4-6 5z" fill="#67a957" /><path d="M10 0v5M16 14h4" stroke="#ddd" strokeWidth="2" /></g>,
    <g><path d="M2 2h14v13H2z" fill="#ddd" /><path d="M5 5l9 8M5 5h5M5 5v5" stroke="#222" strokeWidth="2" /><path d="M20 16v4h-4z" fill="#eee" /></g>,
];

const StatusBar = () => (
    <footer className="flex h-[39px] items-start gap-[2px] bg-[#444] pt-[2px] text-[9px] leading-3 text-[#ddd]">
        <div className="mr-1 flex w-[77px] shrink-0 flex-col text-[#f01818]">
            <input aria-label="宏录制器" className="h-[17px] border border-white bg-[#dcc3c6]" />
            <p className="flex h-[19px] items-center justify-between border-2 border-[#ddd] bg-white px-[3px] whitespace-pre"><span>--</span><span>所在行:</span><span>&lt;</span></p>
        </div>
        <div className="flex min-w-0 flex-1 flex-col gap-1">
            <div className="flex h-[17px] items-center">
                <p className="h-[17px] min-w-0 flex-1 truncate border border-[#505050] border-t-[#222] border-l-[#222] pl-1 leading-[16px]">选择了 1 个 图形</p>
                <div className="ml-1 flex w-[38px] shrink-0 items-center gap-2">
                    <Icon size={13}><path d="M6 9V6a4 4 0 0 1 8 0v3" stroke="#ddd" strokeWidth="2" /><path d="M4 9h12v9H4z" fill="#e8d9b0" stroke="#333" /></Icon>
                    <Icon size={13}><path d="M1 1h18v18H1z" fill="#e4e4e4" /><circle cx="10" cy="10" r="5" stroke="#222" strokeWidth="2" /><path d="M10 1v5M10 14v5M1 10h5M14 10h5" stroke="#222" strokeWidth="2" /></Icon>
                </div>
                {coords.map(([axis, value]) => (
                    <label key={axis} className="mr-px flex w-[63px] shrink-0 items-center">
                        <span className="w-[9px]">{axis}</span>
                        <input defaultValue={value} className={`h-[15px] flex-1 ${field} ${mono}`} />
                        <Spinner label={axis} />
                    </label>
                ))}
            </div>
            <div className="flex h-[16px]">
                <p className="min-w-0 flex-1 truncate border-t border-l border-[#222] pl-1 leading-[15px]">单击或单击并拖动以选择对象</p>
                <button aria-label="自适应降级" className="mr-[3px] flex w-[17px] items-center justify-center bg-[#3a80dc]">
                    <Icon size={13}><path d="M2 6l4-4h12v12l-4 4H2z" fill="#dce6f2" stroke="#fff" /><path d="M2 6h12v12" stroke="#345" strokeWidth="1.500" /></Icon>
                </button>
            </div>
        </div>
        <div className="flex w-20 shrink-0 flex-col gap-1">
            <p className="h-[17px] border border-[#505050] border-t-[#222] border-l-[#222] pl-1 leading-[16px] whitespace-nowrap">栅格 = 0.0mm</p>
            <button className="h-4 border border-[#505050] border-t-[#222] border-l-[#222] pl-1 text-left">添加时间标记</button>
        </div>
        <button aria-label="设置关键点" className={`flex h-[34px] w-8 shrink-0 items-center justify-center ${btn}`}>
            <svg width="20" height="9" viewBox="0 0 20 9" fill="none"><circle cx="4" cy="4.500" r="3" stroke="#080808" strokeWidth="2" /><path d="M7 4.500h12M18 4v4M15 4v3" stroke="#080808" strokeWidth="2" /></svg>
        </button>
        <div className="flex w-[50px] shrink-0 flex-col gap-[2px]">
            <button className={`h-4 ${btn}`}>自动关键点</button>
            <button className={`h-4 ${btn}`}>设置关键点</button>
        </div>
        <div className="flex w-[94px] shrink-0 flex-col gap-[3px]">
            <Drop label="选定对象" value="选定对象" box="h-[15px] w-full border border-[#222] bg-[#eee] text-black" />
            <div className="flex h-4 gap-[3px]">
                <Icon size={18}><path d="M2 12c3 0 3-8 6-8s2 12 5 12 2-8 5-8" stroke="#d45a5a" strokeWidth="1.500" /><path d="M20 16v4h-4z" fill="#eee" /></Icon>
                <button className={`flex-1 ${btn}`}>关键点过滤器...</button>
            </div>
        </div>
        <div className="ml-1 flex w-[95px] shrink-0 flex-col gap-[2px]">
            <div className="flex h-4 items-center justify-between pr-1">
                {transport.map(d => (
                    <Icon key={d} size={15}><path d={d} fill="#aaa" stroke="#ddd" strokeWidth="1.500" /></Icon>
                ))}
            </div>
            <div className="flex h-4 items-center gap-[2px]">
                <Icon size={15}><path d="M2 5v10M9 5v10l-5-5zM11 5v10l5-5zM18 5v10" fill="#ccc" stroke="#ccc" strokeWidth="1.500" /></Icon>
                <input aria-label="当前帧" defaultValue="0" className={`h-[15px] w-[50px] ${field} ${mono}`} />
                <Spinner label="帧" />
                <Icon size={14}><path d="M1 1h14v15H1z" fill="#dde3ea" /><path d="M3 3h9v4H3z" fill="#3a6fb0" /><path d="M3 10h6M3 13h6" stroke="#555" /><circle cx="14" cy="14" r="5" fill="#eee" stroke="#333" /><path d="M14 11v3h3" stroke="#333" /></Icon>
            </div>
        </div>
        <div className="grid w-[74px] shrink-0 grid-cols-4 gap-y-[2px]">
            {[...navTop, ...navBottom].map((icon, i) => (
                <button key={i} aria-label={`视图控制 ${i + 1}`} className="flex h-4 items-center justify-center"><Icon size={14}>{icon}</Icon></button>
            ))}
        </div>
    </footer>
);

const Watermark = () => (
    <div className="pointer-events-none absolute right-[54px] bottom-[22px] w-[178px] text-white opacity-75">
        <div className="flex h-[58px] items-end leading-none">
            <span className="font-['Liberation_Sans',sans-serif] text-[40px] leading-[34px] font-bold">Bai</span>
            <svg width="54" height="58" viewBox="0 0 54 58" className="shrink-0">
                <ellipse cx="7" cy="24" rx="6" ry="8" fill="currentColor" />
                <ellipse cx="19" cy="11" rx="6" ry="9" fill="currentColor" />
                <ellipse cx="35" cy="12" rx="6" ry="9" transform="rotate(12 35 12)" fill="currentColor" />
                <ellipse cx="45" cy="28" rx="7" ry="8" fill="currentColor" />
                <path d="M26 24c9 0 10 9 15 14 7 6 7 19-4 19-6 0-7-1-11-1s-6 1-12 1C3 57 3 44 10 38c6-5 7-14 16-14z" fill="currentColor" />
                <text x="26" y="51" textAnchor="middle" fill="#444" className="font-['Liberation_Sans',sans-serif] text-[24px] font-bold">du</text>
            </svg>
            <span className="font-['Noto_Sans_CJK_SC',sans-serif] text-[30px] leading-[38px] font-bold">经验</span>
        </div>
        <div className="mt-[2px] font-['Noto_Sans',sans-serif] text-[20px] leading-[24px] font-medium">jingyan.baidu.com</div>
    </div>
);

const App = () => (
    <div className="relative flex h-screen flex-col overflow-hidden bg-[#444] font-['Noto_Sans','Noto_Sans_CJK_SC',sans-serif]">
        <Header />
        <Toolbar />
        <Ribbon />
        <main className="flex min-h-0 flex-1">
            <div className="flex min-w-0 flex-1 flex-col">
                <Viewport />
                <Track />
            </div>
            <CommandPanel />
        </main>
        <StatusBar />
        <Watermark />
    </div>
);

export default App;
